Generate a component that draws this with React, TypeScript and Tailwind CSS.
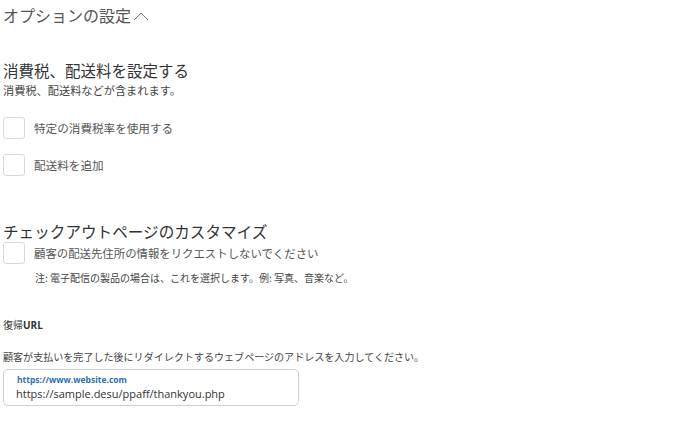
import React from "react";

const jp = { fontFamily: '"Noto Sans CJK JP", "Noto Sans", sans-serif' };

function Box() {
  return <div className="w-[22px] h-[22px] shrink-0 rounded-[3px] border border-[#d9d9d9] bg-white" />;
}

export default function App() {
  return (
    <div className="w-[678px] h-[422px] bg-white px-[3px] flex flex-col text-[#444]" style={jp}>
      <div className="pt-[5px] text-[16px] leading-[20px] text-[#555] flex items-center">
        <span>オプションの設定</span>
        <svg width="16" height="10" viewBox="0 0 16 10" className="ml-[2px] mt-[1px]">
          <path d="M1 9 L8 2 L15 9" fill="none" stroke="#777" strokeWidth="1" />
        </svg>
      </div>
      <div className="mt-[34px] text-[15.5px] leading-[22px] text-[#333]">消費税、配送料を設定する</div>
      <div className="mt-[1px] text-[11.2px] leading-[16px] text-[#444]">消費税、配送料などが含まれます。</div>
      <div className="mt-[19px] flex items-center gap-[9px]">
        <Box />
        <span className="text-[11.6px] leading-[16px] text-[#555]">特定の消費税率を使用する</span>
      </div>
      <div className="mt-[15px] flex items-center gap-[9px]">
        <Box />
        <span className="text-[11.6px] leading-[16px] text-[#555]">配送料を追加</span>
      </div>
      <div className="mt-[44px] text-[15.6px] leading-[22px] text-[#333]">チェックアウトページのカスタマイズ</div>
      <div className="flex items-center gap-[9px]">
        <Box />
        <span className="text-[11.4px] leading-[16px] text-[#555]">顧客の配送先住所の情報をリクエストしないでください</span>
      </div>
      <div className="mt-[7px] ml-[32px] text-[10px] leading-[14px] text-[#444]">注: 電子配信の製品の場合は、これを選択します。例: 写真、音楽など。</div>
      <div className="mt-[33px] text-[10px] leading-[14px] text-[#333]">
        復帰<span className="font-bold" style={{ fontFamily: '"Open Sans", sans-serif' }}>URL</span>
      </div>
      <div className="mt-[18px] text-[10.05px] leading-[14px] text-[#444]">顧客が支払いを完了した後にリダイレクトするウェブページのアドレスを入力してください。</div>
      <div className="mt-[5px] w-[296px] h-[37px] rounded-[5px] border border-[#cfcfcf] pl-[12px] flex flex-col justify-center" style={{ fontFamily: '"Open Sans", sans-serif' }}>
        <div className="text-[8.5px] leading-[12px] font-bold text-[#2f6fb5] pl-[1px]">https://www.website.com</div>
        <div className="text-[11px] leading-[16px] text-[#333]">https://sample.desu/ppaff/thankyou.php</div>
      </div>
    </div>
  );
}
